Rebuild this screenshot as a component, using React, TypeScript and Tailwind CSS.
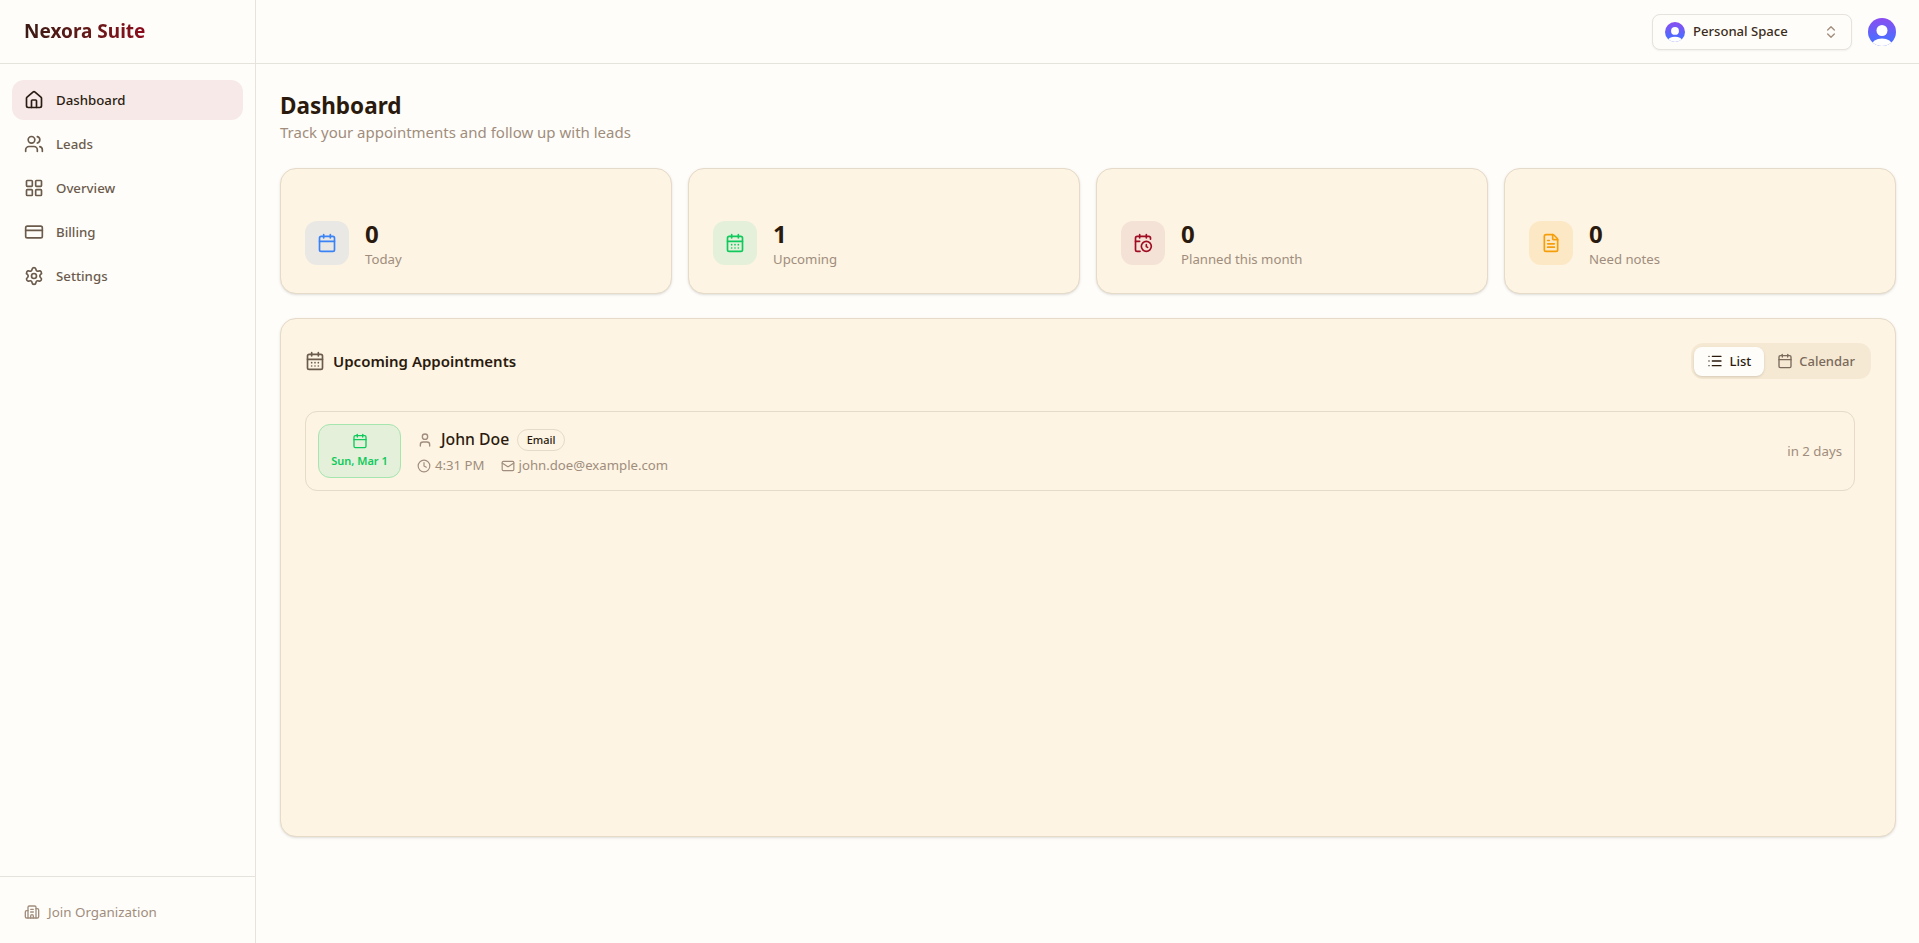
import {
  Building2,
  Calendar,
  CalendarClock,
  CalendarDays,
  ChevronsUpDown,
  Clock,
  CreditCard,
  FileText,
  House,
  LayoutGrid,
  List,
  Mail,
  Settings,
  User,
  Users,
} from "lucide-react";

const navItems = [
  { label: "Dashboard", icon: House, active: true },
  { label: "Leads", icon: Users },
  { label: "Overview", icon: LayoutGrid },
  { label: "Billing", icon: CreditCard },
  { label: "Settings", icon: Settings },
];

const stats = [
  { value: "0", label: "Today", icon: Calendar, box: "bg-[#e9e8e4]", color: "text-[#3b82f6]" },
  { value: "1", label: "Upcoming", icon: CalendarDays, box: "bg-[#e4f0da]", color: "text-[#10c95c]" },
  { value: "0", label: "Planned this month", icon: CalendarClock, box: "bg-[#f4e2d7]", color: "text-[#a00d22]" },
  { value: "0", label: "Need notes", icon: FileText, box: "bg-[#fde8c6]", color: "text-[#f59e0b]" },
];

function AvatarIcon({ className }: { className: string }) {
  return (
    <svg viewBox="0 0 28 28" className={className}>
      <defs>
        <linearGradient id="avatar-grad" x1="0" y1="0" x2="0" y2="1">
          <stop offset="0" stopColor="#8b4df0" />
          <stop offset="0.75" stopColor="#4f6bff" />
        </linearGradient>
        <clipPath id="avatar-clip">
          <circle cx="14" cy="14" r="14" />
        </clipPath>
      </defs>
      <g clipPath="url(#avatar-clip)">
        <rect width="28" height="28" fill="url(#avatar-grad)" />
        <circle cx="14" cy="12.5" r="5.5" fill="#ffffff" />
        <ellipse cx="14" cy="27.5" rx="10.5" ry="7" fill="#ffffff" />
      </g>
    </svg>
  );
}

function Sidebar() {
  return (
    <aside className="flex w-[256px] shrink-0 flex-col border-r border-[#e6e2dc] bg-[#fffdf9]">
      <div className="flex h-16 shrink-0 items-center border-b border-[#e6e2dc] px-6">
        <span className="bg-gradient-to-r from-[#3b1a14] to-[#8b0a1c] bg-clip-text text-[19px] font-bold text-transparent">
          Nexora Suite
        </span>
      </div>
      <nav className="flex flex-1 flex-col gap-1 p-3 pt-4">
        {navItems.map((item) => (
          <div
            key={item.label}
            className={
              item.active
                ? "flex h-10 items-center gap-3 rounded-xl bg-[#f6e9e7] px-3 text-[13.25px] font-medium text-[#2a1c12]"
                : "flex h-10 items-center gap-3 rounded-xl px-3 text-[13.25px] font-medium text-[#6b5b4d]"
            }
          >
            <item.icon className="size-5" />
            <span className="pt-px">{item.label}</span>
          </div>
        ))}
      </nav>
      <div className="flex h-[67px] items-center gap-2 border-t border-[#e6e2dc] px-6 pt-1 text-[13.4px] text-[#a08d7d]">
        <Building2 className="size-4" />
        Join Organization
      </div>
    </aside>
  );
}

function Header() {
  return (
    <header className="flex h-16 shrink-0 items-center justify-end gap-4 border-b border-[#e6e2dc] pr-[23px]">
      <div className="flex h-9 w-[200px] items-center gap-2 rounded-lg border border-[#e6e2dc] bg-[#fffdf9] px-3 shadow-xs">
        <AvatarIcon className="size-5" />
        <span className="flex-1 text-[13.1px] font-medium text-[#3a2c20]">Personal Space</span>
        <ChevronsUpDown className="size-4 text-[#a08d7d]" />
      </div>
      <AvatarIcon className="size-7" />
    </header>
  );
}

function StatCard({ stat }: { stat: (typeof stats)[number] }) {
  return (
    <div className="flex items-start gap-4 rounded-2xl border border-[#e6dac8] bg-[#fdf4e3] px-6 pt-[52px] pb-6 shadow-sm">
      <div className={`flex size-11 items-center justify-center rounded-xl ${stat.box}`}>
        <stat.icon className={`size-5 ${stat.color}`} />
      </div>
      <div>
        <p className="mb-0.5 text-2xl leading-[26px] font-bold text-[#2a1a0e]">{stat.value}</p>
        <p className="text-[13.2px] leading-5 text-[#a08d7d]">{stat.label}</p>
      </div>
    </div>
  );
}

function Appointments() {
  return (
    <div className="mt-6 h-[519px] rounded-2xl border border-[#e6dac8] bg-[#fdf4e3] p-6 shadow-sm">
      <div className="flex items-center justify-between">
        <div className="flex items-center gap-2">
          <CalendarDays className="size-5 text-[#6b5b4d]" />
          <h2 className="pt-px text-[15px] font-semibold text-[#2a1a0e]">Upcoming Appointments</h2>
        </div>
        <div className="flex h-9 items-center rounded-xl bg-[#f5e9d3] px-[3px]">
          <div className="flex h-[29px] items-center gap-1.5 rounded-lg bg-[#fffdf9] px-[13px] text-[13px] font-medium text-[#2a1a0e] shadow-sm">
            <List className="size-4" />
            <span className="pt-px">List</span>
          </div>
          <div className="flex h-[29px] items-center gap-1.5 px-[13px] text-[13px] font-medium text-[#7a6a5b]">
            <Calendar className="size-4" />
            <span className="pt-px">Calendar</span>
          </div>
        </div>
      </div>
      <div className="mt-8 mr-4 flex h-20 items-center gap-4 rounded-xl border border-[#e6dac8] px-3">
        <div className="flex h-[54px] w-[83px] flex-col items-center justify-center gap-1 rounded-xl border border-[#a5e5ae] bg-[#e4f0da] pt-px">
          <Calendar className="size-4 text-[#10c95c]" />
          <span className="text-[11px] font-semibold text-[#10c95c]">Sun, Mar 1</span>
        </div>
        <div className="flex-1 pt-0.5">
          <div className="flex items-center gap-2">
            <User className="size-4 text-[#a08d7d]" />
            <span className="text-[15.75px] font-medium text-[#2a1a0e]">John Doe</span>
            <span className="rounded-full border border-[#e6dac8] px-[8.5px] py-0.5 text-[11px] font-medium text-[#2a1a0e]">
              Email
            </span>
          </div>
          <div className="mt-1 flex items-center gap-4 text-[13.2px] text-[#a08d7d]">
            <span className="flex items-center gap-1">
              <Clock className="size-3.5" />
              4:31 PM
            </span>
            <span className="flex items-center gap-1">
              <Mail className="size-3.5" />
              john.doe@example.com
            </span>
          </div>
        </div>
        <span className="pt-0.5 text-[13.25px] text-[#a08d7d]">in 2 days</span>
      </div>
    </div>
  );
}

export default function App() {
  return (
    <div className="flex h-[943px] overflow-hidden bg-[#fffdf9] font-['Noto_Sans',sans-serif]">
      <Sidebar />
      <div className="flex min-w-0 flex-1 flex-col">
        <Header />
        <main className="pt-[26px] pr-[23px] pl-6">
          <h1 className="text-[22.5px] leading-8 font-bold text-[#2a1a0e]">Dashboard</h1>
          <p className="text-[15px] leading-5 text-[#a08d7d]">Track your appointments and follow up with leads</p>
          <div className="mt-[26px] grid grid-cols-4 gap-4">
            {stats.map((stat) => (
              <StatCard key={stat.label} stat={stat} />
            ))}
          </div>
          <Appointments />
        </main>
      </div>
    </div>
  );
}
